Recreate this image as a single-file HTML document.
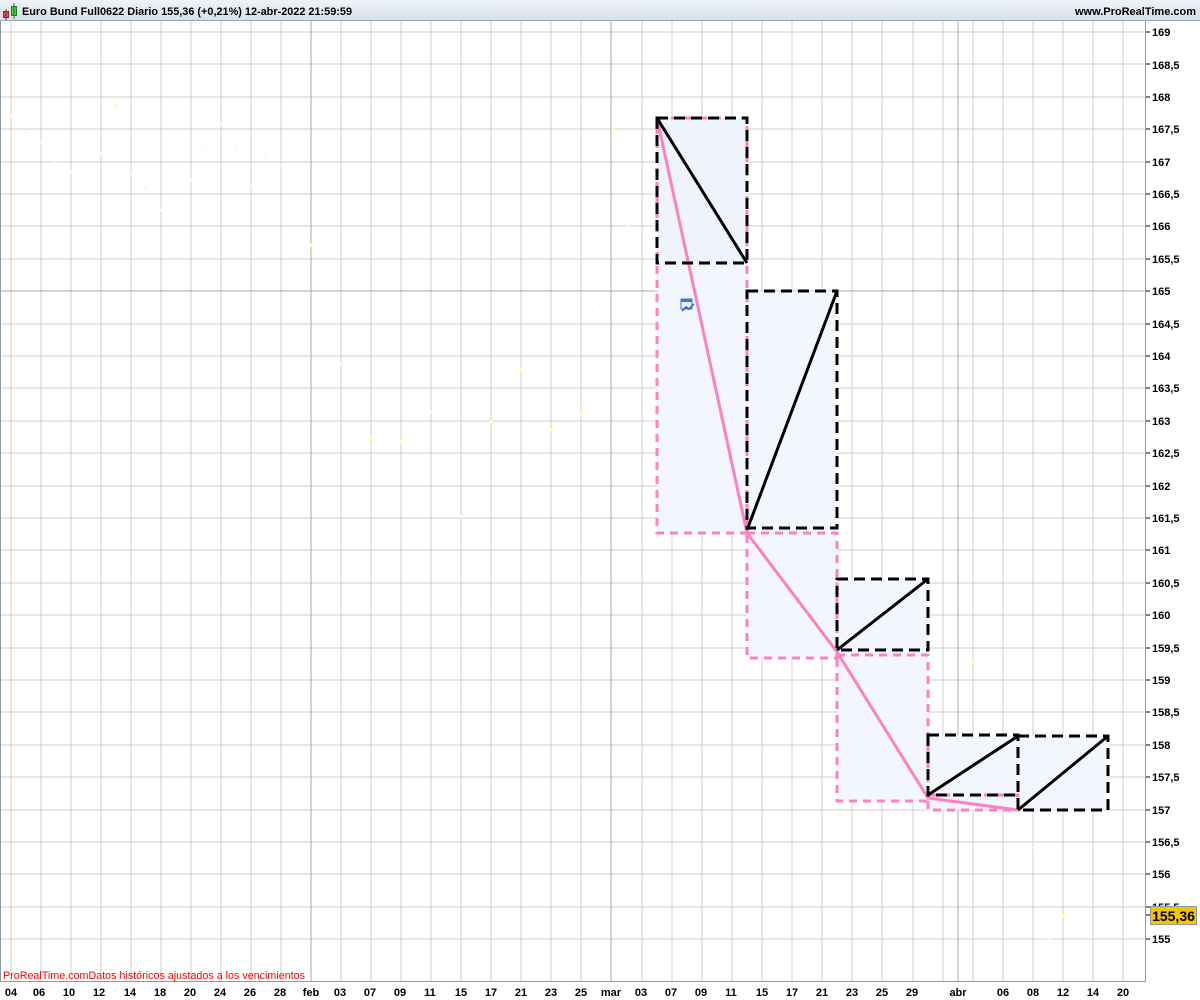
<!DOCTYPE html>
<html><head><meta charset="utf-8"><style>
html,body{margin:0;padding:0;background:#fff;width:1200px;height:1000px;overflow:hidden}
svg{display:block;font-family:"Liberation Sans",Arial,sans-serif}
</style></head><body>
<svg width="1200" height="1000" viewBox="0 0 1200 1000" xmlns="http://www.w3.org/2000/svg">
<defs><linearGradient id="hg" x1="0" y1="0" x2="0" y2="1"><stop offset="0" stop-color="#eef3f8"/><stop offset="1" stop-color="#d6e0ea"/></linearGradient></defs>
<rect x="0" y="0" width="1200" height="1000" fill="#fff"/>
<g stroke="#cfcfcf" stroke-width="1" shape-rendering="crispEdges">
<line x1="11" y1="21" x2="11" y2="981"/><line x1="41" y1="21" x2="41" y2="981"/><line x1="71" y1="21" x2="71" y2="981"/><line x1="101" y1="21" x2="101" y2="981"/><line x1="131" y1="21" x2="131" y2="981"/><line x1="161" y1="21" x2="161" y2="981"/><line x1="191" y1="21" x2="191" y2="981"/><line x1="221" y1="21" x2="221" y2="981"/><line x1="251" y1="21" x2="251" y2="981"/><line x1="281" y1="21" x2="281" y2="981"/><line x1="341" y1="21" x2="341" y2="981"/><line x1="371" y1="21" x2="371" y2="981"/><line x1="401" y1="21" x2="401" y2="981"/><line x1="431" y1="21" x2="431" y2="981"/><line x1="461" y1="21" x2="461" y2="981"/><line x1="491" y1="21" x2="491" y2="981"/><line x1="521" y1="21" x2="521" y2="981"/><line x1="551" y1="21" x2="551" y2="981"/><line x1="581" y1="21" x2="581" y2="981"/><line x1="642" y1="21" x2="642" y2="981"/><line x1="672" y1="21" x2="672" y2="981"/><line x1="702" y1="21" x2="702" y2="981"/><line x1="732" y1="21" x2="732" y2="981"/><line x1="762" y1="21" x2="762" y2="981"/><line x1="792" y1="21" x2="792" y2="981"/><line x1="822" y1="21" x2="822" y2="981"/><line x1="852" y1="21" x2="852" y2="981"/><line x1="882" y1="21" x2="882" y2="981"/><line x1="913" y1="21" x2="913" y2="981"/><line x1="943" y1="21" x2="943" y2="981"/><line x1="973" y1="21" x2="973" y2="981"/><line x1="1003" y1="21" x2="1003" y2="981"/><line x1="1033" y1="21" x2="1033" y2="981"/><line x1="1063" y1="21" x2="1063" y2="981"/><line x1="1093" y1="21" x2="1093" y2="981"/><line x1="1123" y1="21" x2="1123" y2="981"/>
<line x1="0" y1="32" x2="1145" y2="32"/><line x1="0" y1="64" x2="1145" y2="64"/><line x1="0" y1="97" x2="1145" y2="97"/><line x1="0" y1="129" x2="1145" y2="129"/><line x1="0" y1="162" x2="1145" y2="162"/><line x1="0" y1="194" x2="1145" y2="194"/><line x1="0" y1="226" x2="1145" y2="226"/><line x1="0" y1="259" x2="1145" y2="259"/><line x1="0" y1="324" x2="1145" y2="324"/><line x1="0" y1="356" x2="1145" y2="356"/><line x1="0" y1="388" x2="1145" y2="388"/><line x1="0" y1="421" x2="1145" y2="421"/><line x1="0" y1="453" x2="1145" y2="453"/><line x1="0" y1="486" x2="1145" y2="486"/><line x1="0" y1="518" x2="1145" y2="518"/><line x1="0" y1="550" x2="1145" y2="550"/><line x1="0" y1="583" x2="1145" y2="583"/><line x1="0" y1="615" x2="1145" y2="615"/><line x1="0" y1="648" x2="1145" y2="648"/><line x1="0" y1="680" x2="1145" y2="680"/><line x1="0" y1="712" x2="1145" y2="712"/><line x1="0" y1="745" x2="1145" y2="745"/><line x1="0" y1="777" x2="1145" y2="777"/><line x1="0" y1="810" x2="1145" y2="810"/><line x1="0" y1="842" x2="1145" y2="842"/><line x1="0" y1="874" x2="1145" y2="874"/><line x1="0" y1="907" x2="1145" y2="907"/><line x1="0" y1="939" x2="1145" y2="939"/>
</g>
<g stroke="#a8a8a8" stroke-width="1" shape-rendering="crispEdges">
<line x1="311" y1="21" x2="311" y2="981"/><line x1="611" y1="21" x2="611" y2="981"/><line x1="958" y1="21" x2="958" y2="981"/>
<line x1="0" y1="291" x2="1145" y2="291"/>
</g>
<g fill="#ffffc0">
<rect x="9" y="115" width="3" height="3"/><rect x="24" y="131" width="3" height="3"/><rect x="39" y="141" width="3" height="3"/><rect x="54" y="161" width="3" height="3"/><rect x="69" y="170" width="3" height="3"/><rect x="84" y="174" width="3" height="3"/><rect x="99" y="152" width="3" height="3"/><rect x="114" y="104" width="3" height="3"/><rect x="129" y="172" width="3" height="3"/><rect x="144" y="187" width="3" height="3"/><rect x="159" y="209" width="3" height="3"/><rect x="174" y="209" width="3" height="3"/><rect x="189" y="179" width="3" height="3"/><rect x="204" y="145" width="3" height="3"/><rect x="219" y="123" width="3" height="3"/><rect x="234" y="145" width="3" height="3"/><rect x="249" y="185" width="3" height="3"/><rect x="264" y="153" width="3" height="3"/><rect x="279" y="164" width="3" height="3"/><rect x="295" y="228" width="3" height="3"/><rect x="310" y="244" width="3" height="3"/><rect x="340" y="363" width="3" height="3"/><rect x="370" y="438" width="3" height="3"/><rect x="400" y="440" width="3" height="3"/><rect x="430" y="410" width="3" height="3"/><rect x="460" y="515" width="3" height="3"/><rect x="490" y="420" width="3" height="3"/><rect x="520" y="368" width="3" height="3"/><rect x="550" y="428" width="3" height="3"/><rect x="580" y="412" width="3" height="3"/><rect x="597" y="303" width="3" height="3"/><rect x="612" y="128" width="3" height="3"/><rect x="627" y="225" width="3" height="3"/><rect x="972" y="660" width="3" height="3"/><rect x="1032" y="846" width="3" height="3"/><rect x="1047" y="938" width="3" height="3"/><rect x="1062" y="914" width="3" height="3"/>
</g>
<rect x="657" y="118" width="90" height="415" fill="#f4f6fd"/>
<rect x="657" y="118" width="90" height="145" fill="#eef3fc"/>
<rect x="747" y="291" width="90" height="367" fill="#f4f6fd"/>
<rect x="837" y="579" width="91" height="222" fill="#f4f6fd"/>
<rect x="928" y="735" width="90" height="75" fill="#f4f6fd"/>
<rect x="1018" y="736" width="90" height="74" fill="#f4f6fd"/>
<g fill="none" stroke="#ff80c0" stroke-width="3" stroke-dasharray="8,6">
<rect x="657" y="118" width="90" height="415"/>
<rect x="747" y="533" width="90" height="125"/>
<rect x="837" y="655" width="91" height="146"/>
<rect x="928" y="795" width="90" height="15"/>
</g>
<polyline points="657,118 747,533 837,652 928,798 1018,810" fill="none" stroke="#ff80c0" stroke-width="3"/>
<g fill="none" stroke="#000" stroke-width="3" stroke-dasharray="11,6">
<rect x="657" y="118" width="90" height="145"/>
<rect x="747" y="291" width="90" height="237"/>
<rect x="837" y="579" width="91" height="71"/>
<rect x="928" y="735" width="90" height="60"/>
<rect x="1018" y="736" width="90" height="74"/>
</g>
<g stroke="#000" stroke-width="3">
<line x1="657" y1="118" x2="747" y2="263"/>
<line x1="747" y1="530" x2="837" y2="291"/>
<line x1="837" y1="650" x2="928" y2="579"/>
<line x1="928" y1="795" x2="1018" y2="736"/>
<line x1="1018" y1="810" x2="1108" y2="736"/>
</g>
<g transform="translate(681,299)">
<rect x="0" y="0" width="11" height="10" fill="#e8eef8" stroke="#3a7bd5" stroke-width="1"/>
<rect x="0" y="0" width="11" height="3" fill="#3a7bd5"/>
<polyline points="1,12 5,8 8,10 13,5" fill="none" stroke="#1a5fd0" stroke-width="1.5"/>
</g>
<line x1="0.5" y1="21" x2="0.5" y2="981" stroke="#8a9aa8" stroke-width="1"/>
<line x1="1145.5" y1="21" x2="1145.5" y2="982" stroke="#8a9aa8" stroke-width="1"/>
<line x1="0" y1="981.5" x2="1146" y2="981.5" stroke="#8a9aa8" stroke-width="1"/>
<rect x="0" y="0" width="1200" height="21" fill="url(#hg)"/>
<line x1="0" y1="20.5" x2="1200" y2="20.5" stroke="#9aa8b4"/>
<rect x="3.5" y="11.5" width="5" height="6" fill="#e05050" stroke="#803030"/>
<line x1="6" y1="9" x2="6" y2="20" stroke="#803030"/>
<rect x="11.5" y="6.5" width="5" height="9" fill="#40d040" stroke="#208020"/>
<line x1="14" y1="3" x2="14" y2="19" stroke="#208020"/>
<text x="22" y="15" font-size="11" font-weight="bold" fill="#000" textLength="330" lengthAdjust="spacingAndGlyphs">Euro Bund Full0622 Diario 155,36 (+0,21%) 12-abr-2022 21:59:59</text>
<text x="1196" y="15" font-size="11" font-weight="bold" fill="#000" text-anchor="end">www.ProRealTime.com</text>
<g stroke="#000" stroke-width="1">
<line x1="1146" y1="32" x2="1150" y2="32"/><line x1="1146" y1="64" x2="1150" y2="64"/><line x1="1146" y1="97" x2="1150" y2="97"/><line x1="1146" y1="129" x2="1150" y2="129"/><line x1="1146" y1="162" x2="1150" y2="162"/><line x1="1146" y1="194" x2="1150" y2="194"/><line x1="1146" y1="226" x2="1150" y2="226"/><line x1="1146" y1="259" x2="1150" y2="259"/><line x1="1146" y1="291" x2="1150" y2="291"/><line x1="1146" y1="324" x2="1150" y2="324"/><line x1="1146" y1="356" x2="1150" y2="356"/><line x1="1146" y1="388" x2="1150" y2="388"/><line x1="1146" y1="421" x2="1150" y2="421"/><line x1="1146" y1="453" x2="1150" y2="453"/><line x1="1146" y1="486" x2="1150" y2="486"/><line x1="1146" y1="518" x2="1150" y2="518"/><line x1="1146" y1="550" x2="1150" y2="550"/><line x1="1146" y1="583" x2="1150" y2="583"/><line x1="1146" y1="615" x2="1150" y2="615"/><line x1="1146" y1="648" x2="1150" y2="648"/><line x1="1146" y1="680" x2="1150" y2="680"/><line x1="1146" y1="712" x2="1150" y2="712"/><line x1="1146" y1="745" x2="1150" y2="745"/><line x1="1146" y1="777" x2="1150" y2="777"/><line x1="1146" y1="810" x2="1150" y2="810"/><line x1="1146" y1="842" x2="1150" y2="842"/><line x1="1146" y1="874" x2="1150" y2="874"/><line x1="1146" y1="907" x2="1150" y2="907"/><line x1="1146" y1="939" x2="1150" y2="939"/><line x1="1146" y1="915" x2="1150" y2="915"/>
</g>
<g font-size="11" font-weight="bold" fill="#000">
<text x="1152" y="36">169</text><text x="1152" y="69">168,5</text><text x="1152" y="101">168</text><text x="1152" y="133">167,5</text><text x="1152" y="166">167</text><text x="1152" y="198">166,5</text><text x="1152" y="230">166</text><text x="1152" y="263">165,5</text><text x="1152" y="295">165</text><text x="1152" y="328">164,5</text><text x="1152" y="360">164</text><text x="1152" y="392">163,5</text><text x="1152" y="425">163</text><text x="1152" y="457">162,5</text><text x="1152" y="490">162</text><text x="1152" y="522">161,5</text><text x="1152" y="554">161</text><text x="1152" y="587">160,5</text><text x="1152" y="619">160</text><text x="1152" y="652">159,5</text><text x="1152" y="684">159</text><text x="1152" y="716">158,5</text><text x="1152" y="749">158</text><text x="1152" y="781">157,5</text><text x="1152" y="814">157</text><text x="1152" y="846">156,5</text><text x="1152" y="878">156</text><text x="1152" y="911">155,5</text><text x="1152" y="943">155</text>
</g>
<rect x="1150.5" y="906.5" width="46" height="18" fill="#f5c400" stroke="#8a9aa8"/>
<text x="1173.5" y="921" font-size="14" font-weight="bold" fill="#000" text-anchor="middle">155,36</text>
<text x="3" y="979" font-size="11" fill="#ff0000" textLength="302" lengthAdjust="spacingAndGlyphs">ProRealTime.comDatos históricos ajustados a los vencimientos</text>
<g font-size="11" font-weight="bold" fill="#000" text-anchor="middle">
<text x="11" y="996">04</text><text x="39" y="996">06</text><text x="69" y="996">10</text><text x="99" y="996">12</text><text x="130" y="996">14</text><text x="160" y="996">18</text><text x="190" y="996">20</text><text x="220" y="996">24</text><text x="250" y="996">26</text><text x="280" y="996">28</text><text x="311" y="996">feb</text><text x="340" y="996">03</text><text x="370" y="996">07</text><text x="400" y="996">09</text><text x="430" y="996">11</text><text x="461" y="996">15</text><text x="491" y="996">17</text><text x="521" y="996">21</text><text x="551" y="996">23</text><text x="581" y="996">25</text><text x="611" y="996">mar</text><text x="641" y="996">03</text><text x="671" y="996">07</text><text x="701" y="996">09</text><text x="731" y="996">11</text><text x="762" y="996">15</text><text x="792" y="996">17</text><text x="822" y="996">21</text><text x="852" y="996">23</text><text x="882" y="996">25</text><text x="912" y="996">29</text><text x="958" y="996">abr</text><text x="1003" y="996">06</text><text x="1033" y="996">08</text><text x="1063" y="996">12</text><text x="1093" y="996">14</text><text x="1123" y="996">20</text>
</g>
</svg>
</body></html>
